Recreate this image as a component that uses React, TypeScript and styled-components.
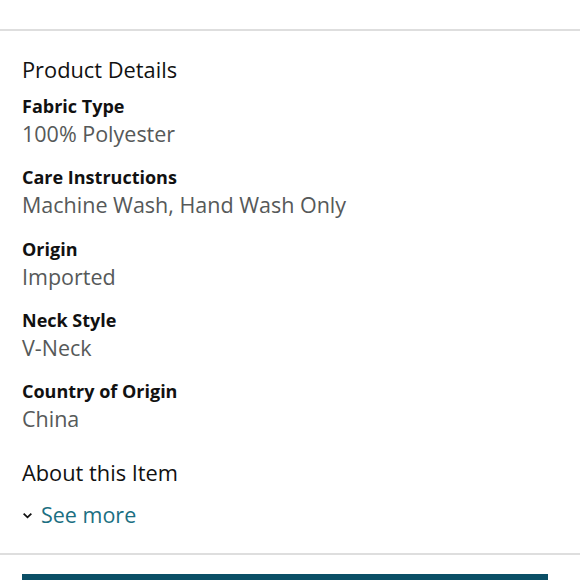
import { createGlobalStyle, styled } from "styled-components";

const GlobalStyle = createGlobalStyle`
  body {
    margin: 0;
    background: #fff;
    font-family: "Open Sans", "Noto Sans", Arial, sans-serif;
  }
`;

const details = [
  { label: "Fabric Type", value: "100% Polyester" },
  { label: "Care Instructions", value: "Machine Wash, Hand Wash Only" },
  { label: "Origin", value: "Imported" },
  { label: "Neck Style", value: "V-Neck" },
  { label: "Country of Origin", value: "China" },
];

const App = () => {
  return (
    <Page>
      <GlobalStyle />
      <Divider />
      <Section>
        <Heading>Product Details</Heading>
        <List>
          {details.map((d) => (
            <Item key={d.label}>
              <Label>{d.label}</Label>
              <Value>{d.value}</Value>
            </Item>
          ))}
        </List>
        <SubHeading>About this Item</SubHeading>
        <SeeMore>
          <Chevron viewBox="0 0 10 10">
            <path d="M1.5 3.2 L5 6.7 L8.5 3.2" />
          </Chevron>
          See more
        </SeeMore>
      </Section>
      <Divider />
      <Footer>
        <ActionButton />
      </Footer>
    </Page>
  );
};

export default App;

const Page = styled.div`
  padding-top: 29px;
  height: 580px;
  box-sizing: border-box;
  overflow: hidden;
`;

const Divider = styled.div`
  height: 2px;
  background: #dedede;
`;

const Section = styled.div`
  padding: 23px 22px 23px;
`;

const Heading = styled.div`
  font-size: 21.8px;
  line-height: 32px;
  color: #111;
`;

const List = styled.div`
  display: flex;
  flex-direction: column;
  gap: 15.3px;
  margin-top: 7px;
`;

const Item = styled.div`
  display: flex;
  flex-direction: column;
`;

const Label = styled.div`
  font-size: 18px;
  font-weight: 700;
  line-height: 26px;
  color: #111;
`;

const Value = styled.div`
  font-size: 21.5px;
  line-height: 30px;
  color: #565959;
`;

const SubHeading = styled.div`
  margin-top: 23px;
  font-size: 21.8px;
  line-height: 32px;
  color: #111;
`;

const SeeMore = styled.div`
  margin-top: 11px;
  display: flex;
  align-items: center;
  gap: 8px;
  font-size: 21.5px;
  line-height: 30px;
  color: #1b6f82;
`;

const Chevron = styled.svg`
  width: 11px;
  height: 11px;
  fill: none;
  stroke: #111;
  stroke-width: 1.6;
`;

const Footer = styled.div`
  padding: 19px 32px 0 22px;
`;

const ActionButton = styled.div`
  height: 40px;
  background: #0b4f66;
`;
